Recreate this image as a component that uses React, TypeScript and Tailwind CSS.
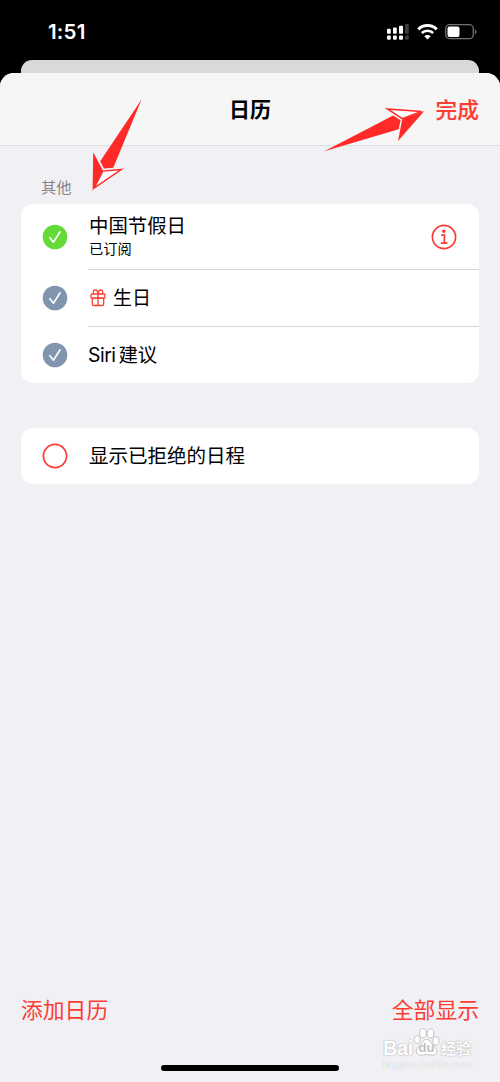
import type { ReactNode } from "react";

const RED = "#fb3d34";

function SignalIcon() {
  return (
    <svg width="22" height="16" viewBox="0 0 22 16" fill="#fff" aria-hidden>
      <rect x="0" y="4.7" width="3.8" height="5" rx="1" />
      <rect x="6" y="3.5" width="3.8" height="6.2" rx="1" />
      <rect x="12" y="1.7" width="4" height="8" rx="1" />
      <rect x="18" y="0" width="3.8" height="9.7" rx="1" fill="#3a3a3a" />
      <rect x="0" y="11.4" width="3.8" height="4.4" rx="1.2" />
      <rect x="6" y="11.4" width="3.8" height="4.4" rx="1.2" />
      <rect x="12" y="11.4" width="4" height="4.4" rx="1.2" />
      <rect x="18" y="11.4" width="3.8" height="4.4" rx="1.2" fill="#3a3a3a" />
    </svg>
  );
}

function WifiIcon() {
  return (
    <svg width="21" height="16" viewBox="0 0 21 16" fill="none" stroke="#fff" aria-hidden>
      <path d="M1.3 5.3a13.2 13.2 0 0 1 18.4 0" strokeWidth="3" />
      <path d="M4.8 9a8.2 8.2 0 0 1 11.4 0" strokeWidth="2.6" />
      <path d="M7.3 12.2a4.6 4.6 0 0 1 6.4 0l-3.2 3.3z" fill="#fff" stroke="none" />
    </svg>
  );
}

function BatteryIcon() {
  return (
    <svg width="32" height="16" viewBox="0 0 32 16" aria-hidden>
      <rect x="0.7" y="0.7" width="27.6" height="14" rx="4" fill="none" stroke="#747474" strokeWidth="1.3" />
      <rect x="2.5" y="2.5" width="12" height="10.4" rx="2" fill="#fff" />
      <path d="M30 5.2c1.9.7 1.9 4.3 0 5z" fill="#747474" />
    </svg>
  );
}

function Check({ color }: { color: string }) {
  return (
    <svg width="26" height="26" viewBox="0 0 26 26" className="mb-px shrink-0" aria-hidden>
      <circle cx="13" cy="13" r="12.3" fill={color} />
      <path d="M7.9 13.7l3.5 4.5 6.7-10.4" fill="none" stroke="#fff" strokeWidth="1.6" strokeLinecap="round" strokeLinejoin="round" />
    </svg>
  );
}

function EmptyCircle() {
  return (
    <svg width="26" height="26" viewBox="0 0 26 26" className="mb-px shrink-0" aria-hidden>
      <circle cx="13" cy="13" r="11.6" fill="none" stroke={RED} strokeWidth="1.7" />
    </svg>
  );
}

function InfoIcon() {
  return (
    <svg width="26" height="26" viewBox="0 0 26 26" fill="none" stroke={RED} strokeWidth="1.7" aria-hidden>
      <circle cx="13" cy="13" r="11.6" />
      <circle cx="12.8" cy="7.3" r="1.7" fill={RED} stroke="none" />
      <path d="M10.2 11.2h3.2v8M9.8 19.2h6.6" />
    </svg>
  );
}

function GiftIcon() {
  return (
    <svg width="16" height="18" viewBox="0 0 16 18" fill="none" stroke={RED} strokeWidth="1.3" aria-hidden>
      <rect x="1" y="5" width="14" height="4.2" rx="1" />
      <path d="M2.3 9.2v5.7q0 1.6 1.6 1.6h8.2q1.6 0 1.6-1.6V9.2M8 5v11.5M2.3 9.2h11.4" />
      <path d="M8 5C7.8 2.4 6.5 1 5.2 1 2.9 1 2.8 3.8 4.2 5M8 5C8.2 2.4 9.5 1 10.8 1c2.3 0 2.4 2.8 1 4" />
    </svg>
  );
}

function Row({ icon, children, className = "" }: { icon: ReactNode; children: ReactNode; className?: string }) {
  return (
    <li className={`flex ${className}`}>
      <div className="flex w-[67px] shrink-0 items-center pl-[21px]">{icon}</div>
      {children}
    </li>
  );
}

function Arrows() {
  return (
    <svg className="pointer-events-none absolute top-0 left-0" width="500" height="200" viewBox="0 0 500 200" aria-hidden>
      <g fill="#ff2a27">
        <path d="M141.7 99.3 100.2 161.2 103.9 168.6 113.3 167.8z" />
        <path d="M93.2 152.2 102.8 170.2 92.6 191z" />
        <path d="M324.3 151.3 393.2 115.6 400.6 120.3 398.6 129.2z" />
        <path d="M424.3 111 402.3 119 398 140.9z" />
      </g>
      <g fill="#fff" stroke="#ff2a27" strokeWidth="1.5">
        <path d="M94 188.2 102.8 171.1 121.2 169.6z" />
        <path d="M421.5 111.4 387.5 108.9 402.2 118.7z" />
      </g>
    </svg>
  );
}

function Watermark() {
  return (
    <div className="absolute top-[1028px] left-[383px] w-[92px] font-['Liberation_Sans','Noto_Sans_CJK_SC',sans-serif] text-white">
      <div className="flex h-7 items-end [text-shadow:0_0_1px_#aaa,0_0_2px_#bbb]">
        <span className="w-[30px] text-[20px] leading-[15px] font-bold tracking-[-0.4px]">Bai</span>
        <span className="relative flex h-7 w-[27px] shrink-0 items-end justify-center">
          <svg className="absolute inset-0" width="27" height="28" viewBox="0 0 26 28" fill="#fff" stroke="#bdbdc1" strokeWidth=".9" aria-hidden>
            <ellipse cx="3.8" cy="11.6" rx="3.1" ry="4" />
            <ellipse cx="9.5" cy="5.2" rx="3.4" ry="4.6" />
            <ellipse cx="17" cy="5.4" rx="3.4" ry="4.6" transform="rotate(8 17 5.4)" />
            <ellipse cx="22.4" cy="12.8" rx="3.1" ry="4.1" />
            <path d="M13 11.5c-4 0-4.5 4.2-7.2 6.4C.8 22 2.5 27.3 7.3 27.3c2.2 0 3.4-.7 5.7-.7s3.7.7 6 .7c4.8 0 6-5.4 1.3-9.4-2.7-2.2-3.4-6.4-7.3-6.4z" />
          </svg>
          <span className="relative pb-[1px] text-[13px] leading-[14px] font-bold text-[#c0c0c4] [text-shadow:none]">du</span>
        </span>
        <span className="ml-px text-[15px] leading-[15px] font-bold whitespace-nowrap">经验</span>
      </div>
      <div className="mt-[2px] text-[11px] leading-[12px] whitespace-nowrap [text-shadow:0_0_1px_#aaa]">jingyan.baidu.com</div>
    </div>
  );
}

export default function App() {
  return (
    <div className="relative flex h-[1082px] w-[500px] flex-col overflow-hidden bg-black font-['Inter','Noto_Sans_CJK_SC',sans-serif] text-black">
      <header className="flex h-[60px] shrink-0 items-start justify-between pr-[23px] pl-12 text-white">
        <span className="pt-[18px] text-[20.5px] leading-7 font-semibold tracking-[0.2px]">1:51</span>
        <div className="flex items-center gap-[7.5px] pt-6">
          <SignalIcon />
          <WifiIcon />
          <BatteryIcon />
        </div>
      </header>

      <div className="mx-[21px] h-[13px] shrink-0 rounded-t-[11px] bg-[#d9d9d9]" />

      <main className="flex flex-1 flex-col overflow-hidden rounded-t-[14px] bg-[#f1f0f5]">
        <div className="grid h-[73px] shrink-0 grid-cols-3 items-center border-b border-[#dedee0] bg-[#f6f6f6] px-[21px]">
          <h1 className="col-start-2 pt-[2px] text-center text-[21px] leading-7 font-bold">日历</h1>
          <button className="justify-self-end pt-[2px] text-[21.7px] leading-7 font-medium text-[#fb3d34] [-webkit-text-stroke:0.2px]">完成</button>
        </div>

        <h2 className="mt-[31px] ml-[41px] text-[15.3px] leading-[22px] text-[#85858a]">其他</h2>

        <ul className="mx-[21px] mt-[5px] rounded-[12px] bg-white text-[19.4px] leading-7">
          <Row icon={<Check color="#64da38" />} className="h-[66px]">
            <div className="flex flex-1 items-center justify-between border-b border-[#d5d5d7] pr-[22px]">
              <div className="pl-px">
                <p className="leading-[24px]">中国节假日</p>
                <p className="text-[14.2px] leading-[21px]">已订阅</p>
              </div>
              <InfoIcon />
            </div>
          </Row>
          <Row icon={<Check color="#8295af" />} className="h-[57px]">
            <div className="flex flex-1 items-center gap-[7px] border-b border-[#d5d5d7] pl-[2px]">
              <GiftIcon />
              <span className="pt-[2px] text-[19px]">生日</span>
            </div>
          </Row>
          <Row icon={<Check color="#8295af" />} className="h-[56px]">
            <div className="flex flex-1 items-center gap-[3px]"><span className="tracking-[-0.5px]">Siri</span>建议</div>
          </Row>
        </ul>

        <ul className="mx-[21px] mt-[45px] rounded-[12px] bg-white text-[19.5px] leading-7">
          <Row icon={<EmptyCircle />} className="h-14">
            <div className="flex flex-1 items-center pl-px">显示已拒绝的日程</div>
          </Row>
        </ul>

        <footer className="mt-auto flex h-[86px] items-start justify-between px-[21px] text-[21.8px] leading-7 text-[#fb3d34]">
          <button>添加日历</button>
          <button>全部显示</button>
        </footer>
      </main>

      <div className="absolute top-[1065px] left-[161px] h-[6px] w-[178px] rounded-full bg-black" />
      <Watermark />
      <Arrows />
    </div>
  );
}
